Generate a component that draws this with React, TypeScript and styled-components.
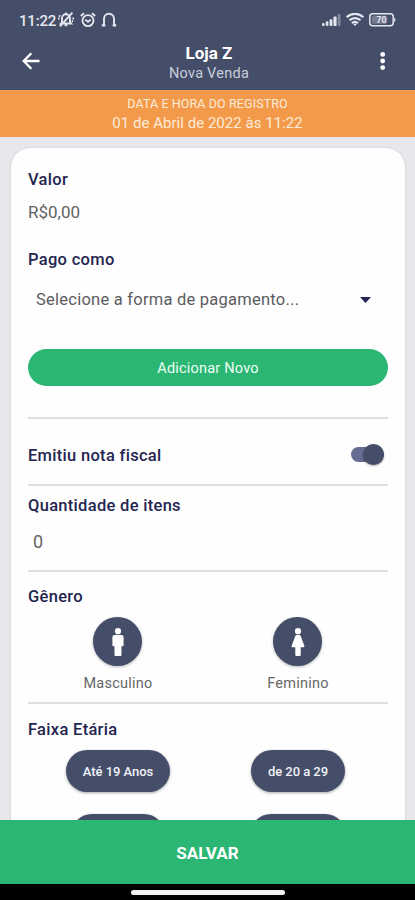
import React from "react";
import styled, { createGlobalStyle } from "styled-components";

const navy = "#454e69";
const ink = "#242550";
const green = "#2cb673";

const GlobalStyle = createGlobalStyle`
  * { box-sizing: border-box; }
  html, body { margin: 0; padding: 0; }
  body { font-family: Roboto, sans-serif; overflow: hidden; }
  button { font-family: inherit; border: 0; margin: 0; padding: 0; }
`;

const Screen = styled.div`
  width: 415px;
  height: 900px;
  display: flex;
  flex-direction: column;
  background: #e7e8ec;
  overflow: hidden;
`;

const StatusBar = styled.div`
  flex: none;
  height: 38px;
  padding: 1px 19px 0;
  display: flex;
  align-items: center;
  justify-content: space-between;
  background: ${navy};
  color: #e4e6ef;
`;

const StatusGroup = styled.div<{ $gap: number }>`
  display: flex;
  align-items: center;
  gap: ${(p) => p.$gap}px;
`;

const Clock = styled.span`
  font-size: 15px;
  line-height: 18px;
  padding-top: 2px;
  font-weight: 500;
  letter-spacing: -0.2px;
  width: 36px;
  white-space: nowrap;
`;

const Header = styled.header`
  flex: none;
  height: 52px;
  padding: 0 22px 5px;
  display: flex;
  align-items: center;
  justify-content: space-between;
  background: ${navy};
  border-bottom: 1px solid #34506e;
`;

const IconButton = styled.button`
  display: flex;
  background: none;
  color: #fff;
`;

const Titles = styled.div`
  display: flex;
  flex-direction: column;
  align-items: center;
  padding: 3px 0 0 5px;
`;

const Title = styled.h1`
  margin: 0;
  font-size: 17px;
  line-height: 22px;
  font-weight: 700;
  color: #fff;
`;

const Subtitle = styled.div`
  font-size: 14.5px;
  line-height: 20px;
  letter-spacing: 0.25px;
  color: #c9cddb;
`;

const Banner = styled.div`
  flex: none;
  height: 47px;
  padding-top: 4px;
  display: flex;
  flex-direction: column;
  align-items: center;
  background: #f39a4a;
  color: #fdebd9;
`;

const BannerCaption = styled.div`
  font-size: 12.5px;
  line-height: 20px;
  letter-spacing: 0.1px;
`;

const BannerDate = styled.div`
  font-size: 15px;
  line-height: 19px;
  letter-spacing: 0.03px;
`;

const Content = styled.main`
  flex: 1;
  min-height: 0;
  padding: 11px 10px 0 11px;
  overflow: hidden;
`;

const Card = styled.div`
  height: 800px;
  padding: 19px 17px 0;
  border-radius: 19px;
  background: #fefefe;
  box-shadow: 0 0 2px rgba(60, 62, 80, 0.22);
`;

const Section = styled.section<{ $height: number; $top?: number; $last?: boolean }>`
  height: ${(p) => p.$height}px;
  padding-top: ${(p) => p.$top ?? 0}px;
  border-bottom: ${(p) => (p.$last ? "0" : "2px solid #dfdfe2")};
`;

const Label = styled.h2`
  margin: 0;
  font-size: 16.5px;
  line-height: 26px;
  font-weight: 500;
  letter-spacing: 0.3px;
  color: ${ink};
  white-space: nowrap;
`;

const Amount = styled.div`
  margin: 7px 0 23px;
  font-size: 17px;
  line-height: 24px;
  color: #636363;
`;

const Select = styled.div`
  height: 53px;
  padding: 0 17px 0 8px;
  display: flex;
  align-items: center;
  justify-content: space-between;
  font-size: 16.5px;
  letter-spacing: 0.24px;
  color: #5c5c5f;
`;

const AddButton = styled.button`
  width: 100%;
  height: 37px;
  margin-top: 23px;
  padding-top: 2px;
  border-radius: 19px;
  background: ${green};
  color: #ecfff5;
  font-size: 14.5px;
  letter-spacing: 0.2px;
  display: flex;
  align-items: center;
  justify-content: center;
`;

const ToggleRow = styled.div`
  height: 65px;
  padding: 8px 4px 0 0;
  display: flex;
  align-items: center;
  justify-content: space-between;
`;

const Track = styled.div`
  width: 33px;
  height: 15px;
  border-radius: 8px;
  background: #666b92;
  display: flex;
  align-items: center;
  justify-content: flex-end;
  margin-bottom: 3px;
`;

const Thumb = styled.div`
  flex: none;
  width: 21px;
  height: 21px;
  border-radius: 50%;
  background: ${navy};
  box-shadow: 0 1px 2px rgba(0, 0, 0, 0.35);
`;

const Quantity = styled.div`
  padding: 11px 0 0 5px;
  font-size: 18px;
  line-height: 24px;
  color: #666;
`;

const Columns = styled.div<{ $top: number; $gap?: number }>`
  padding-top: ${(p) => p.$top}px;
  display: grid;
  grid-template-columns: 1fr 1fr;
  justify-items: center;
  row-gap: ${(p) => p.$gap ?? 0}px;
`;

const Option = styled.div`
  display: flex;
  flex-direction: column;
  align-items: center;
`;

const Circle = styled.button`
  width: 49px;
  height: 49px;
  border-radius: 50%;
  background: ${navy};
  display: flex;
  align-items: center;
  justify-content: center;
  box-shadow: 0 1px 3px rgba(0, 0, 0, 0.28);
`;

const OptionName = styled.div`
  margin-top: 8px;
  font-size: 14.5px;
  line-height: 20px;
  letter-spacing: 0.25px;
  color: #666;
`;

const Pill = styled.button<{ $width: number }>`
  width: ${(p) => p.$width}px;
  height: 42px;
  padding-top: 1px;
  border-radius: 21px;
  background: ${navy};
  color: #f1f2f8;
  font-size: 13px;
  font-weight: 500;
  letter-spacing: -0.05px;
  box-shadow: 0 1px 3px rgba(0, 0, 0, 0.35);
`;

const SaveButton = styled.button`
  flex: none;
  width: 100%;
  height: 64px;
  padding-top: 1px;
  background: ${green};
  color: #fff;
  font-size: 17px;
  font-weight: 700;
`;

const NavBar = styled.div`
  flex: none;
  height: 16px;
  background: #000;
  display: flex;
  justify-content: center;
  align-items: center;
`;

const Handle = styled.div`
  width: 154px;
  height: 5px;
  border-radius: 3px;
  background: #f2f1f3;
`;

const MutedBell = () => (
  <svg width="18" height="17" viewBox="0 0 18 17" fill="none" stroke="currentColor" strokeWidth="1.9">
    <path d="M5 11.5V7.2a4 4 0 0 1 8 0v4.3l1 1H4zM7.7 14.3h2.6M9 1.4v1.8M3 15.4 15.4 1.6M1 7.5h1.6M15.4 7.5H17M2 4.6l1.3.8M16 10.6l-1.2-.7" />
  </svg>
);

const Alarm = () => (
  <svg width="16" height="16" viewBox="0 0 16 16" fill="none" stroke="currentColor" strokeWidth="1.8">
    <circle cx="8" cy="8.6" r="5.5" />
    <path d="m.8 4 3.2-2.700M15.200 4 12 1.300M5.200 7.600 8 9.800l2.800-2.200" />
  </svg>
);

const Headphones = () => (
  <svg width="16" height="16" viewBox="0 0 16 16" fill="none" stroke="currentColor" strokeWidth="1.9">
    <path d="M3 13.5V6.7a5 5 0 0 1 10 0v6.8" />
    <path d="M.8 13.4h3.5M11.7 13.4h3.5" strokeWidth="2.2" />
  </svg>
);

const Signal = () => (
  <svg width="19" height="12" viewBox="0 0 19 12" fill="currentColor">
    <rect x="0" y="9" width="2.6" height="3" rx="1" />
    <rect x="3.8" y="7.3" width="2.6" height="4.7" rx="1" />
    <rect x="7.6" y="5.3" width="2.8" height="6.7" rx="1" />
    <rect x="11.4" y="2.6" width="3.2" height="9.4" rx="1" />
    <rect x="15.7" y="0" width="2.8" height="12" rx="1" opacity=".38" />
  </svg>
);

const Wifi = () => (
  <svg width="18" height="13" viewBox="0 0 18 13" fill="none" stroke="currentColor" strokeWidth="2.2">
    <path d="M.7 4.2a11.8 11.8 0 0 1 16.600 0M3.500 7.300a7.800 7.800 0 0 1 11 0M6 10.200a4.200 4.200 0 0 1 6 0" />
    <path d="m7.300 11.300 1.700 1.700 1.700-1.700a2.400 2.400 0 0 0-3.400 0z" fill="currentColor" stroke="none" />
  </svg>
);

const Battery = () => (
  <svg width="27" height="14" viewBox="0 0 27 14">
    <rect x=".8" y=".8" width="23.4" height="12" rx="3" fill="none" stroke="currentColor" strokeWidth="1.5" />
    <rect x="2.8" y="2.8" width="15.5" height="8" rx="1.5" fill="currentColor" opacity=".3" />
    <path d="M25.2 4.7c1.7.2 1.7 4 0 4.2z" fill="currentColor" />
    <text x="12.5" y="9.9" textAnchor="middle" fontFamily="Roboto" fontSize="8.5" fontWeight="700" fill="currentColor">70</text>
  </svg>
);

const BackArrow = () => (
  <svg width="18" height="18" viewBox="0 0 18 18" fill="none" stroke="currentColor" strokeWidth="2.3">
    <path d="M17.5 9H2M9.3 1.200 1.700 9l7.600 7.800" />
  </svg>
);

const Dots = () => (
  <svg width="20" height="18" viewBox="0 0 20 18" fill="currentColor">
    <circle cx="9.7" cy="2.4" r="2.4" />
    <circle cx="9.7" cy="9" r="2.4" />
    <circle cx="9.7" cy="15.6" r="2.4" />
  </svg>
);

const Caret = () => (
  <svg width="11" height="6" viewBox="0 0 11 6" fill={ink}>
    <path d="M0 0h11L5.5 6z" />
  </svg>
);

const Man = () => (
  <svg width="14" height="28" viewBox="0 0 14 28" fill="#fff">
    <circle cx="7" cy="3.2" r="3.1" />
    <path d="M3.6 7h6.8a2.2 2.2 0 0 1 2.2 2.2v8.1a1 1 0 0 1-1 1h-1.1V27a1 1 0 0 1-1 1h-5a1 1 0 0 1-1-1v-8.7H2.4a1 1 0 0 1-1-1V9.2A2.2 2.2 0 0 1 3.6 7z" />
  </svg>
);

const Woman = () => (
  <svg width="14" height="28" viewBox="0 0 14 28" fill="#fff">
    <circle cx="7" cy="3.2" r="3.1" />
    <path d="M5.7 7h2.6a1.5 1.5 0 0 1 1.4 1l3.7 10a.9.9 0 0 1-.8 1.2H9.7V27a1 1 0 0 1-1 1H5.3a1 1 0 0 1-1-1v-7.8H1.4A.9.9 0 0 1 .6 18l3.7-10a1.5 1.5 0 0 1 1.4-1z" />
  </svg>
);

const ages = [
  { id: 1, text: "Até 19 Anos", width: 104 },
  { id: 2, text: "de 20 a 29", width: 94 },
  { id: 3, text: "", width: 94 },
  { id: 4, text: "", width: 96 },
];

export default function App() {
  return (
    <>
      <GlobalStyle />
      <Screen>
        <StatusBar>
          <StatusGroup $gap={2}>
            <Clock>11:22</Clock>
            <StatusGroup $gap={5}>
              <MutedBell />
              <Alarm />
              <Headphones />
            </StatusGroup>
          </StatusGroup>
          <StatusGroup $gap={5}>
            <Signal />
            <Wifi />
            <Battery />
          </StatusGroup>
        </StatusBar>
        <Header>
          <IconButton aria-label="Voltar"><BackArrow /></IconButton>
          <Titles>
            <Title>Loja Z</Title>
            <Subtitle>Nova Venda</Subtitle>
          </Titles>
          <IconButton aria-label="Menu"><Dots /></IconButton>
        </Header>
        <Banner>
          <BannerCaption>DATA E HORA DO REGISTRO</BannerCaption>
          <BannerDate>01 de Abril de 2022 às 11:22</BannerDate>
        </Banner>
        <Content>
          <Card>
            <Section $height={252}>
              <Label>Valor</Label>
              <Amount>R$0,00</Amount>
              <Label>Pago como</Label>
              <Select>
                <span>Selecione a forma de pagamento...</span>
                <Caret />
              </Select>
              <AddButton>Adicionar Novo</AddButton>
            </Section>
            <Section $height={67}>
              <ToggleRow>
                <Label>Emitiu nota fiscal</Label>
                <Track><Thumb /></Track>
              </ToggleRow>
            </Section>
            <Section $height={86} $top={7}>
              <Label>Quantidade de itens</Label>
              <Quantity>0</Quantity>
            </Section>
            <Section $height={132} $top={12}>
              <Label>Gênero</Label>
              <Columns $top={7}>
                <Option>
                  <Circle aria-label="Masculino"><Man /></Circle>
                  <OptionName>Masculino</OptionName>
                </Option>
                <Option>
                  <Circle aria-label="Feminino"><Woman /></Circle>
                  <OptionName>Feminino</OptionName>
                </Option>
              </Columns>
            </Section>
            <Section $height={160} $top={13} $last>
              <Label>Faixa Etária</Label>
              <Columns $top={7} $gap={22}>
                {ages.map((a) => (
                  <Pill key={a.id} $width={a.width}>{a.text}</Pill>
                ))}
              </Columns>
            </Section>
          </Card>
        </Content>
        <SaveButton>SALVAR</SaveButton>
        <NavBar><Handle /></NavBar>
      </Screen>
    </>
  );
}
